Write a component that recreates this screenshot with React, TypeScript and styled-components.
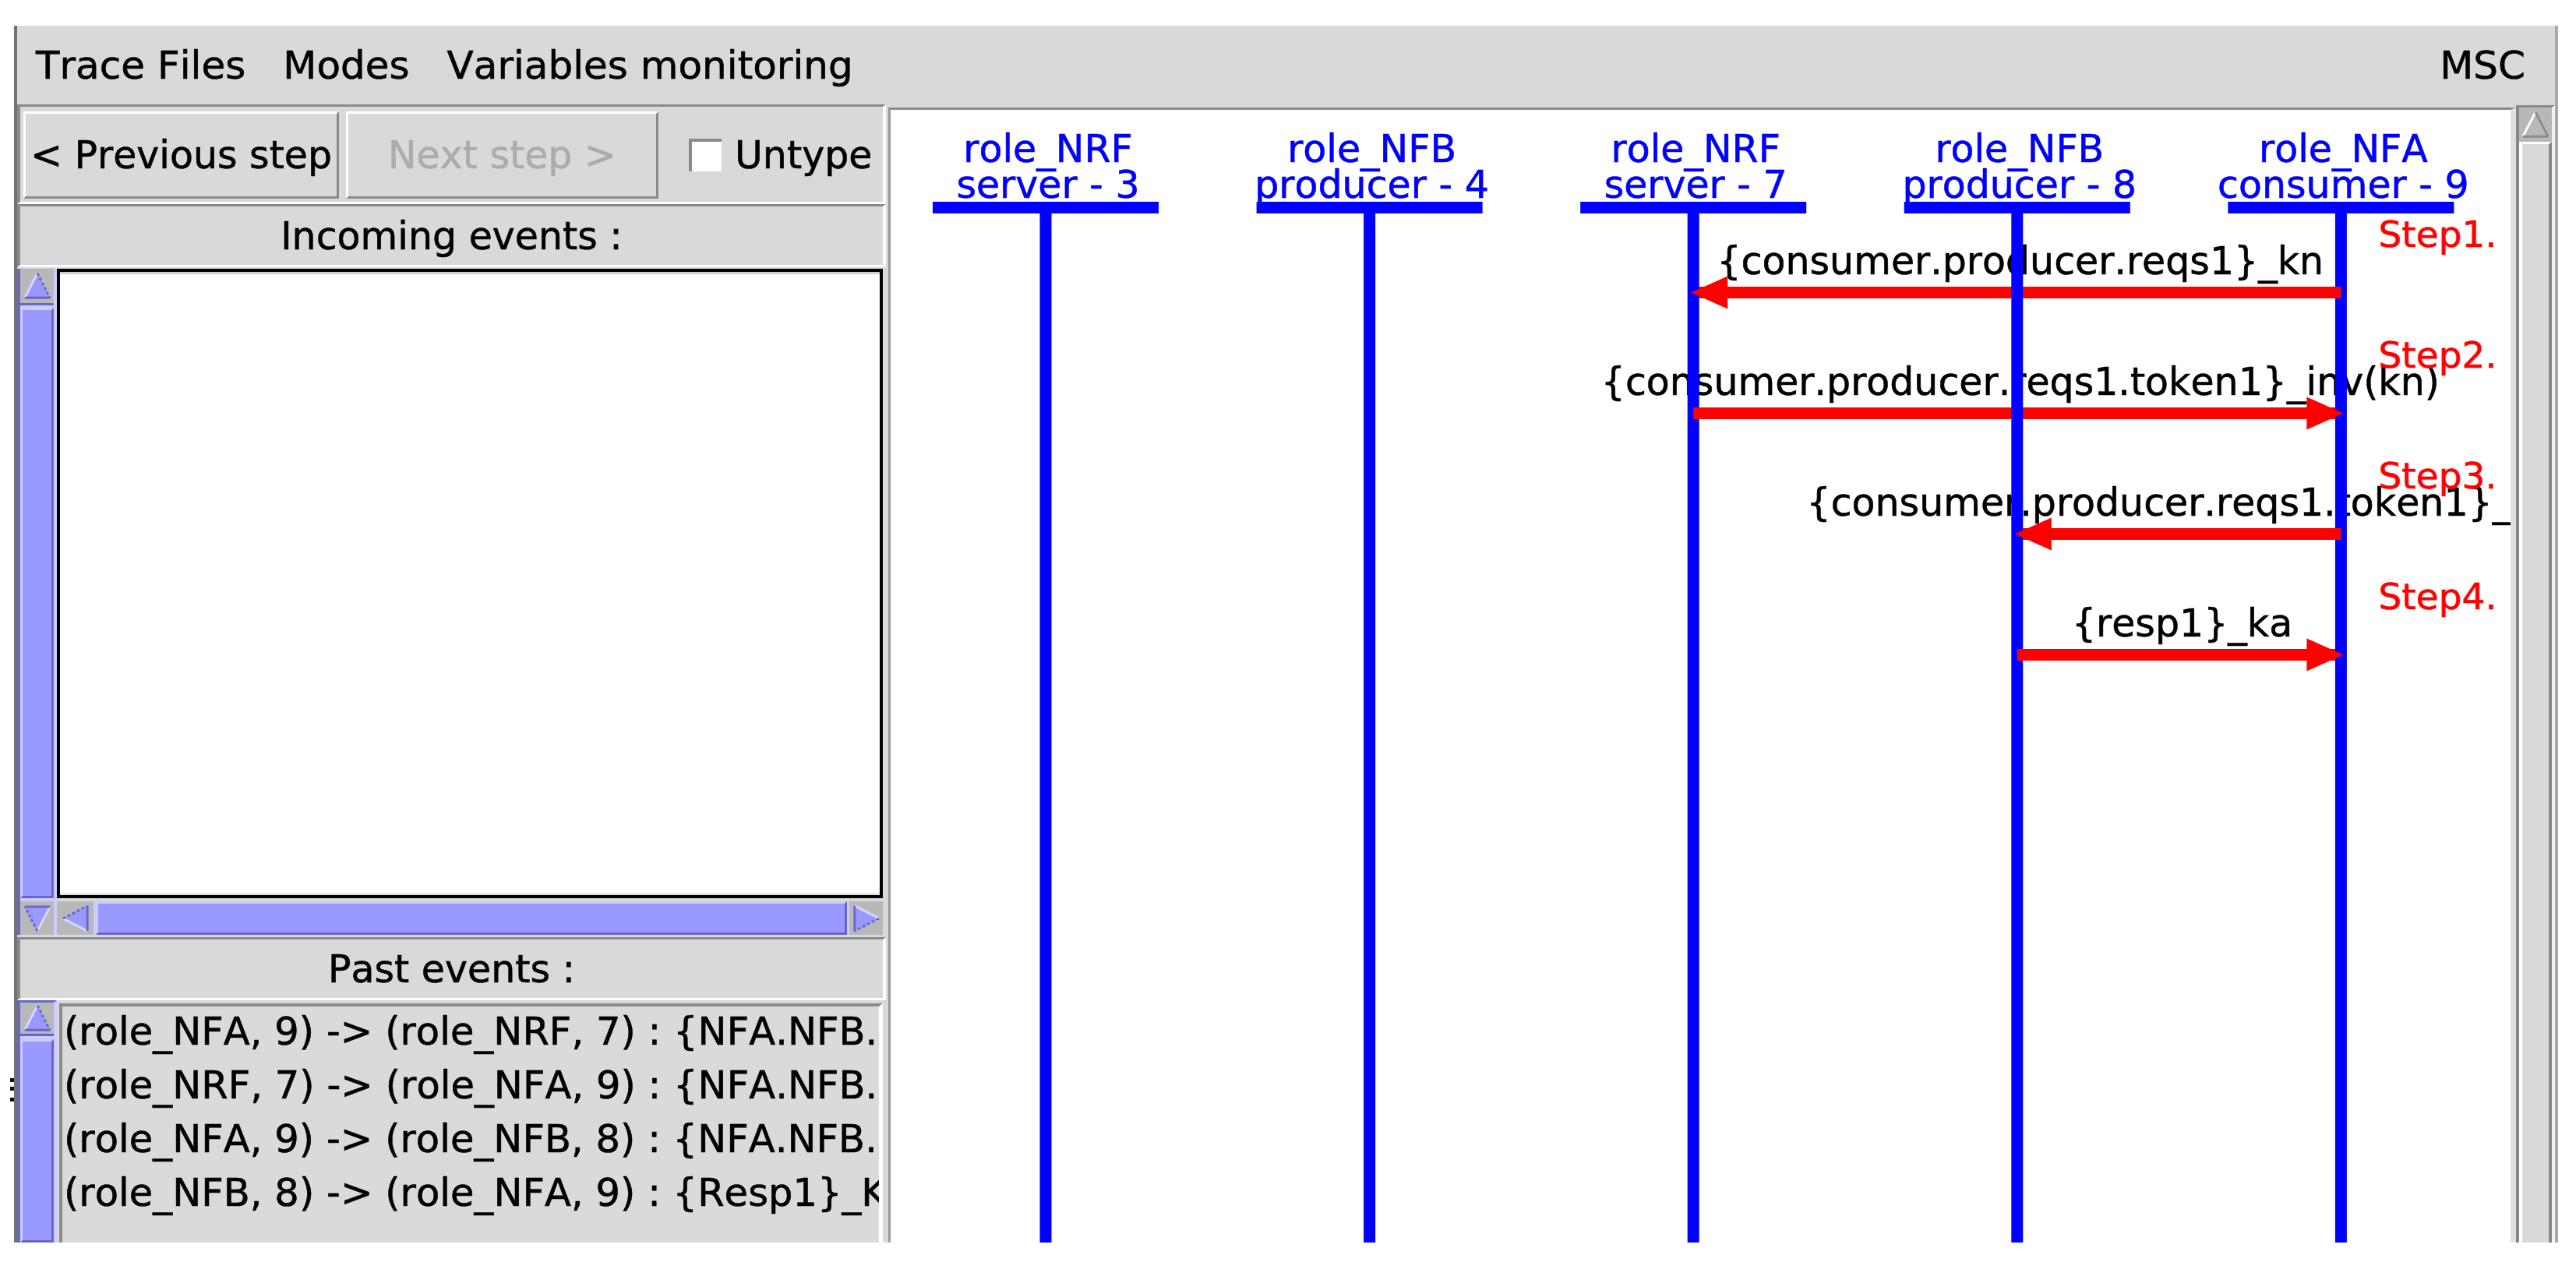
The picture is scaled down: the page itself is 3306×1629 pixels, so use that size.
import React from "react"
import styled, { createGlobalStyle, css } from "styled-components"

const GlobalStyle = createGlobalStyle`
  html, body {
    margin: 0;
    padding: 0;
    background: #ffffff;
  }
  body {
    font-family: "DejaVu Sans", "Liberation Sans", sans-serif;
    font-kerning: none;
    font-variant-ligatures: none;
  }
`

// lifeline headers, left to right
const LIFELINES = [
    ["role_NRF", "server - 3"],
    ["role_NFB", "producer - 4"],
    ["role_NRF", "server - 7"],
    ["role_NFB", "producer - 8"],
    ["role_NFA", "consumer - 9"],
]

const MESSAGES = [
    { from: 4, to: 2, label: "{consumer.producer.reqs1}_kn" },
    { from: 2, to: 4, label: "{consumer.producer.reqs1.token1}_inv(kn)" },
    { from: 4, to: 3, label: "{consumer.producer.reqs1.token1}_kn" },
    { from: 3, to: 4, label: "{resp1}_ka" },
]

const PAST = [
    "(role_NFA, 9) -> (role_NRF, 7) : {NFA.NFB.reqs1}_kn",
    "(role_NRF, 7) -> (role_NFA, 9) : {NFA.NFB.reqs1.token1}_inv(kn)",
    "(role_NFA, 9) -> (role_NFB, 8) : {NFA.NFB.reqs1.token1}_kb",
    "(role_NFB, 8) -> (role_NFA, 9) : {Resp1}_KA",
]

const lineX = (i: number) => 199 + i * 415.6
const msgY = (k: number) => 234.5 + k * 155

const etched = css`
    box-sizing: border-box;
    border-style: solid;
    border-width: 3px 4px 3px 4px;
    border-color: #8a8a8a #ffffff #ffffff #8a8a8a;
`

const Page = styled.div`
    position: relative;
    box-sizing: border-box;
    width: 3306px;
    height: 1629px;
    padding: 33px 0 0 18px;
`

const Grip = styled.div`
    position: absolute;
    left: 13px;
    top: 1384px;
    width: 5px;
    height: 5px;
    background: #111;
    box-shadow: 0 11px 0 #111, 0 25px 0 #111;
`

const Frame = styled.div`
    box-sizing: border-box;
    width: 3265px;
    height: 1562px;
    border-left: 4px solid #727272;
    border-right: 4px solid #a9a9a9;
    background: #d9d9d9;
    display: flex;
    flex-direction: column;
    font-family: "DejaVu Sans", "Liberation Sans", sans-serif;
    font-size: 49px;
    font-kerning: none;
    -webkit-text-stroke: 0.6px currentColor;
    color: #000;
`

const MenuBar = styled.div`
    height: 101px;
    flex-shrink: 0;
    display: flex;
    align-items: center;
    font-size: 50px;
`

const MenuItem = styled.span<{ $right?: boolean }>`
    padding: 0 24px;
    line-height: 58px;
    white-space: nowrap;
    ${p => p.$right && css`
        margin-left: auto;
        padding-right: 38px;
    `}
`

const Body = styled.div`
    flex: 1;
    min-height: 0;
    display: flex;
`

const LeftPanel = styled.div`
    width: 1115px;
    flex-shrink: 0;
    display: flex;
    flex-direction: column;
`

const Toolbar = styled.div`
    ${etched};
    height: 128px;
    flex-shrink: 0;
    display: flex;
    align-items: flex-start;
    padding: 6px 0 0 4px;
`

const StepButton = styled.button<{ $width: number; $disabled?: boolean }>`
    box-sizing: border-box;
    width: ${p => p.$width}px;
    height: 112px;
    margin-right: 9px;
    padding: 0;
    border-style: solid;
    border-width: 3px;
    border-color: #ffffff #8a8a8a #8a8a8a #ffffff;
    background: #d9d9d9;
    font: inherit;
    font-kerning: none;
    -webkit-text-stroke: 0.6px currentColor;
    color: ${p => (p.$disabled ? "#b0abab" : "#000")};
    white-space: nowrap;
    overflow: hidden;
    text-align: center;
`

const CheckGroup = styled.label`
    height: 112px;
    display: flex;
    align-items: center;
    margin-left: 30px;
    white-space: nowrap;
`

const CheckBox = styled.span`
    box-sizing: border-box;
    width: 42px;
    height: 42px;
    background: #ffffff;
    border-top: 4px solid #8a8a8a;
    border-left: 4px solid #8a8a8a;
    margin-right: 17px;
`

const SectionTitle = styled.div`
    ${etched};
    height: 81px;
    flex-shrink: 0;
    padding-top: 3px;
    line-height: 72px;
    text-align: center;
    white-space: nowrap;
`

const IncomingPane = styled.div`
    box-sizing: border-box;
    height: 860px;
    flex-shrink: 0;
    display: flex;
    padding: 2px 0 3px 0;
`

const VScroll = styled.div<{ $topLine?: boolean }>`
    box-sizing: border-box;
    width: 51px;
    flex-shrink: 0;
    display: flex;
    flex-direction: column;
    background: #ccccff;
    border-left: 4px solid #6666cc;
    border-right: 4px solid #ccccff;
    ${p => p.$topLine && css`border-top: 3px solid #6666cc;`}
`

const ScrollBtn = styled.div<{ $w?: number; $h?: number; $edge?: string }>`
    box-sizing: border-box;
    flex-shrink: 0;
    width: ${p => (p.$w ? `${p.$w}px` : "auto")};
    height: ${p => (p.$h ? `${p.$h}px` : "auto")};
    background: #b8b8b8;
    display: flex;
    align-items: center;
    justify-content: center;
    ${p => p.$edge && css`border-${p.$edge}: 3px solid #6666cc;`}
`

const Thumb = styled.div<{ $gap?: string }>`
    box-sizing: border-box;
    flex: 1;
    margin: ${p => p.$gap || "0"};
    background: #9999ff;
    border-style: solid;
    border-width: 3px;
    border-color: #ccccff #6666cc #6666cc #ccccff;
`

const ListColumn = styled.div`
    flex: 1;
    display: flex;
    flex-direction: column;
    gap: 4px;
    margin-right: 4px;
`

const ListBox = styled.div`
    box-sizing: border-box;
    height: 808px;
    border: 4px solid #000;
    background: #fff;
    box-shadow: inset 0 3px 0 #cfcfcf, inset 0 -3px 0 #e6e6e6;
`

const HScroll = styled.div`
    height: 43px;
    display: flex;
    background: #ccccff;
`

const PastPane = styled.div`
    flex: 1;
    min-height: 0;
    display: flex;
`

const PastList = styled.div`
    flex: 1;
    min-width: 0;
    margin: 4px 4px 0 3px;
    padding-left: 2px;
    border-top: 4px solid #8a8a8a;
    border-left: 4px solid #8a8a8a;
    border-right: 5px solid #ffffff;
    background: #dadada;
    overflow: hidden;
    font-size: 49.6px;
`

const PastRow = styled.div`
    height: 69px;
    line-height: 64px;
    white-space: nowrap;
`

const RightPane = styled.div`
    flex: 1;
    min-width: 0;
    display: flex;
    padding-top: 4px;
`

const Viewport = styled.div`
    flex: 1;
    min-width: 0;
    margin-left: 3px;
    border-top: 3px solid #8a8a8a;
    border-left: 3px solid #9a9a9a;
    border-right: 7px solid #e0e0e0;
    background: #ffffff;
    overflow: hidden;
`

const MscScroll = styled.div`
    box-sizing: border-box;
    width: 50px;
    flex-shrink: 0;
    display: flex;
    flex-direction: column;
    border-top: 3px solid #8a8a8a;
    border-left: 4px solid #888888;
    border-right: 4px solid #f2f2f2;
    margin-top: -3px;
`

const MscTrack = styled.div`
    flex: 1;
    background: #d9d9d9;
    border-top: 3px solid #ffffff;
    border-left: 4px solid #ffffff;
    border-right: 4px solid #888888;
`

const Diagram = styled.svg`
    display: block;
    overflow: hidden;
`

const DiagramText = styled.text<{ $color: string; $size?: number }>`
    font-family: "DejaVu Sans", "Liberation Sans", sans-serif;
    font-size: ${p => p.$size || 49}px;
    font-kerning: none;
    fill: ${p => p.$color};
    stroke: ${p => p.$color};
    stroke-width: 0.6px;
`

type Dir = "up" | "down" | "left" | "right"

const ArrowIcon = ({ dir, muted }: { dir: Dir; muted?: boolean }) => {
    const rot = { up: 0, right: 90, down: 180, left: 270 }[dir]
    const light = muted ? "#ffffff" : "#d8d8ff"
    const dark = muted ? "#8a8a8a" : "#6666cc"
    return (
        <svg width="38" height="38" viewBox="0 0 40 40">
            <g transform={`rotate(${rot} 20 20)`}>
                <polygon points="20,3 37,36 3,36" fill={muted ? "none" : "#9999ff"} />
                <line x1="3" y1="36" x2="20" y2="3" stroke={light} strokeWidth="3" />
                <line x1="20" y1="3" x2="37" y2="36" stroke={dark} strokeWidth="3" strokeDasharray={muted ? undefined : "4 3"} />
                <line x1="3" y1="36" x2="37" y2="36" stroke={dark} strokeWidth="3" />
            </g>
        </svg>
    )
}

const MscDiagram = () => (
    <Diagram width={2079} height={1454}>
        {LIFELINES.map(([top, bottom], i) => (
            <g key={`h${i}`}>
                <DiagramText $color="#0000ff" x={lineX(i) + 3} y={67} textAnchor="middle">{top}</DiagramText>
                <DiagramText $color="#0000ff" x={lineX(i) + 3} y={113} textAnchor="middle">{bottom}</DiagramText>
                <rect x={lineX(i) - 145} y={118} width={290} height={15} fill="#0000ff" />
            </g>
        ))}

        {MESSAGES.map((m, k) => (
            <DiagramText key={`l${k}`} $color="#000" x={(lineX(m.from) + lineX(m.to)) / 2 + 4} y={msgY(k) - 23.5} textAnchor="middle">
                {m.label}
            </DiagramText>
        ))}

        {MESSAGES.map((m, k) => {
            const a = lineX(m.from)
            const b = lineX(m.to)
            return <rect key={`m${k}`} x={Math.min(a, b)} y={msgY(k) - 7.5} width={Math.abs(b - a)} height={15} fill="#ff0000" />
        })}

        {LIFELINES.map((_, i) => (
            <rect key={`v${i}`} x={lineX(i) - 7.5} y={133} width={15} height={1330} fill="#0000ff" />
        ))}

        {MESSAGES.map((m, k) => {
            const tail = lineX(m.from)
            const tip = lineX(m.to)
            const dir = tip > tail ? 1 : -1
            const y = msgY(k)
            const back = tip - dir * 44
            return (
                <g key={`a${k}`}>
                    <rect x={dir > 0 ? tail : tail - 8} y={y - 7.5} width={8} height={15} fill="#ff0000" />
                    <polygon points={`${tip + dir * 3},${y} ${back},${y - 21} ${back},${y + 21}`} fill="#ff0000" />
                </g>
            )
        })}

        {MESSAGES.map((_, k) => (
            <DiagramText key={`s${k}`} $color="#ff0000" $size={47} x={1909.5} y={msgY(k) - 58.5}>
                {`Step${k + 1}.`}
            </DiagramText>
        ))}
    </Diagram>
)

const App = () => {
    return (
        <Page>
            <GlobalStyle />
            <Grip />
            <Frame>
                <MenuBar>
                    <MenuItem>Trace Files</MenuItem>
                    <MenuItem>Modes</MenuItem>
                    <MenuItem>Variables monitoring</MenuItem>
                    <MenuItem $right>MSC</MenuItem>
                </MenuBar>

                <Body>
                    <LeftPanel>
                        <Toolbar>
                            <StepButton $width={405}>&lt; Previous step</StepButton>
                            <StepButton $width={401} $disabled>Next step &gt;</StepButton>
                            <CheckGroup>
                                <CheckBox />
                                Untype
                            </CheckGroup>
                        </Toolbar>

                        <SectionTitle>Incoming events :</SectionTitle>
                        <IncomingPane>
                            <VScroll>
                                <ScrollBtn $h={47} $edge="bottom"><ArrowIcon dir="up" /></ScrollBtn>
                                <Thumb $gap="3px 0 4px 0" />
                                <ScrollBtn $h={43}><ArrowIcon dir="down" /></ScrollBtn>
                            </VScroll>
                            <ListColumn>
                                <ListBox />
                                <HScroll>
                                    <ScrollBtn $w={47}><ArrowIcon dir="left" /></ScrollBtn>
                                    <Thumb $gap="0 3px" />
                                    <ScrollBtn $w={43}><ArrowIcon dir="right" /></ScrollBtn>
                                </HScroll>
                            </ListColumn>
                        </IncomingPane>

                        <SectionTitle>Past events :</SectionTitle>
                        <PastPane>
                            <VScroll $topLine>
                                <ScrollBtn $h={43} $edge="bottom"><ArrowIcon dir="up" /></ScrollBtn>
                                <Thumb $gap="4px 0 0 0" />
                            </VScroll>
                            <PastList>
                                {PAST.map(row => (
                                    <PastRow key={row}>{row}</PastRow>
                                ))}
                            </PastList>
                        </PastPane>
                    </LeftPanel>

                    <RightPane>
                        <Viewport>
                            <MscDiagram />
                        </Viewport>
                        <MscScroll>
                            <ScrollBtn $h={44}><ArrowIcon dir="up" muted /></ScrollBtn>
                            <MscTrack />
                        </MscScroll>
                    </RightPane>
                </Body>
            </Frame>
        </Page>
    )
}

export default App
